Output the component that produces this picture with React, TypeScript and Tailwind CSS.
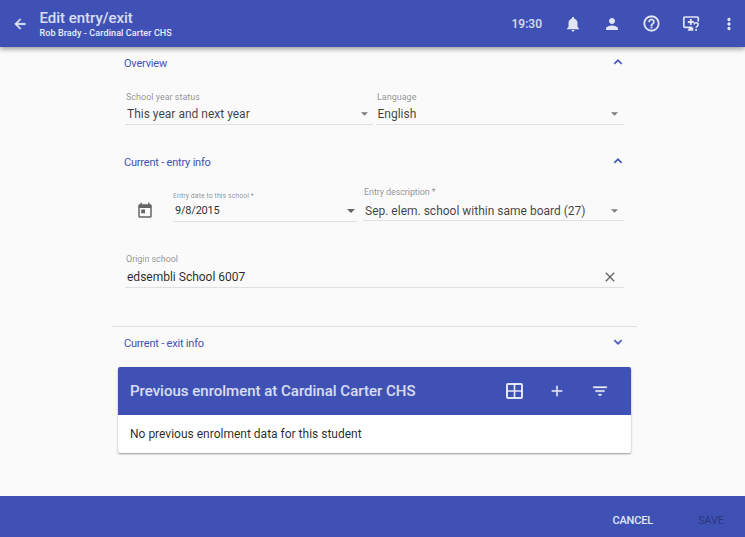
import type { ReactNode } from "react";

const paths = {
  back: "M20 11H7.83l5.59-5.59L12 4l-8 8 8 8 1.41-1.41L7.83 13H20v-2z",
  bell: "M12 22c1.1 0 2-.9 2-2h-4c0 1.1.89 2 2 2zm6-6v-5c0-3.07-1.64-5.64-4.5-6.32V4c0-.83-.67-1.5-1.5-1.5s-1.5.67-1.5 1.5v.68C7.63 5.36 6 7.92 6 11v5l-2 2v1h16v-1l-2-2z",
  person: "M12 12c2.21 0 4-1.79 4-4s-1.79-4-4-4-4 1.79-4 4 1.79 4 4 4zm0 2c-2.67 0-8 1.34-8 4v2h16v-2c0-2.66-5.33-4-8-4z",
  help: "M11 18h2v-2h-2v2zm1-16C6.48 2 2 6.48 2 12s4.48 10 10 10 10-4.48 10-10S17.52 2 12 2zm0 18c-4.41 0-8-3.59-8-8s3.59-8 8-8 8 3.59 8 8-3.59 8-8 8zm0-14c-2.21 0-4 1.79-4 4h2c0-1.1.9-2 2-2s2 .9 2 2c0 2-3 1.75-3 5h2c0-2.25 3-2.5 3-5 0-2.21-1.79-4-4-4z",
  more: "M12 8c1.1 0 2-.9 2-2s-.9-2-2-2-2 .9-2 2 .9 2 2 2zm0 2c-1.1 0-2 .9-2 2s.9 2 2 2 2-.9 2-2-.9-2-2-2zm0 6c-1.1 0-2 .9-2 2s.9 2 2 2 2-.9 2-2-.9-2-2-2z",
  up: "M12 8l-6 6 1.41 1.41L12 10.83l4.59 4.58L18 14z",
  down: "M16.59 8.59L12 13.17 7.41 8.59 6 10l6 6 6-6z",
  event: "M19 3h-1V1h-2v2H8V1H6v2H5c-1.11 0-2 .9-2 2v14c0 1.1.89 2 2 2h14c1.1 0 2-.9 2-2V5c0-1.1-.9-2-2-2zm0 16H5V8h14v11zM7 10h5v5H7z",
  close: "M19 6.41L17.59 5 12 10.59 6.41 5 5 6.41 10.59 12 5 17.59 6.41 19 12 13.41 17.59 19 19 17.59 13.41 12z",
  add: "M19 13h-6v6h-2v-6H5v-2h6V5h2v6h6v2z",
  filter: "M10 18h4v-2h-4v2zM3 6v2h18V6H3zm3 7h12v-2H6v2z",
};

function Icon({ name, className }: { name: keyof typeof paths; className: string }) {
  return (
    <svg viewBox="0 0 24 24" fill="currentColor" stroke="currentColor" className={`shrink-0 ${className}`}>
      <path d={paths[name]} />
    </svg>
  );
}

function ScreenHelpIcon() {
  return (
    <svg viewBox="0 0 18 18" className="size-[18px] shrink-0" fill="none" stroke="currentColor">
      <path d="M10 12.3H2.8a1 1 0 0 1-1-1V3a1 1 0 0 1 1-1h12.5a1 1 0 0 1 1 1v3.5" strokeWidth="1.7" />
      <path d="M8.8 4v6M5.8 7h6" strokeWidth="1.8" />
      <path d="M5.5 15.8h5.8v-3.2H7.4z" fill="currentColor" stroke="none" />
      <path d="M12.2 9.5c0-2.3 4-2.3 4 .1 0 1.6-2.1 1.7-2.1 3.2" strokeWidth="1.6" />
      <path d="M13.2 14h1.8v1.8h-1.8z" fill="currentColor" stroke="none" />
    </svg>
  );
}

function GridIcon() {
  return (
    <svg viewBox="0 0 18 18" className="size-[18px] shrink-0" fill="none" stroke="currentColor">
      <rect x="2" y="2" width="15" height="14" rx="1" strokeWidth="2" />
      <path d="M9.5 2v14M2 9h15" strokeWidth="1.7" />
    </svg>
  );
}

function Section({ title, open, className }: { title: string; open: boolean; className: string }) {
  return (
    <div className={`flex items-center justify-between pl-3 pr-[11px] text-[#3f51b5] ${className}`}>
      <span className="pt-0.5 text-[11px] leading-4 tracking-[-0.2px]">{title}</span>
      <Icon name={open ? "up" : "down"} className="relative -top-px size-4 stroke-[0.6]" />
    </div>
  );
}

function Caret({ className }: { className: string }) {
  return (
    <svg viewBox="0 0 8 4" className={`mb-px h-1 shrink-0 ${className}`} fill="currentColor">
      <path d="M0 0h8L4 4z" />
    </svg>
  );
}

function Field({
  label,
  labelClass = "text-[9px] leading-[14px]",
  valueClass = "h-5 pl-0.5 pr-[5px] text-[12px] text-black/75",
  className,
  value,
  end,
}: {
  label: string;
  labelClass?: string;
  valueClass?: string;
  className: string;
  value: string;
  end: ReactNode;
}) {
  return (
    <div className={`border-b border-[#e0e0e0] ${className}`}>
      <div className={`whitespace-nowrap text-black/45 ${labelClass} pl-px`}>{label}</div>
      <div className={`flex items-center justify-between whitespace-nowrap ${valueClass}`}>
        <span>{value}</span>
        {end}
      </div>
    </div>
  );
}

export default function App() {
  return (
    <div className="flex h-[537px] w-[745px] flex-col bg-[#fafafa] font-['Roboto',sans-serif]">
      <header className="z-10 flex h-[47px] shrink-0 items-center bg-[#3f51b5] pl-3 pr-2 text-white/85 shadow-[0_2px_5px_rgba(0,0,0,0.4)]">
        <Icon name="back" className="size-4 stroke-[0.8]" />
        <div className="ml-[11.5px] flex-1">
          <h1 className="text-[15px] leading-[18px] font-medium tracking-[-0.03px] text-white/80">Edit entry/exit</h1>
          <p className="text-[9px] leading-3 font-medium tracking-[0.1px] text-white/90">Rob Brady - Cardinal Carter CHS</p>
        </div>
        <span className="mr-[22px] text-[12px] font-medium text-white/80">19:30</span>
        <Icon name="bell" className="mr-[21px] size-[18px] stroke-0" />
        <Icon name="person" className="mr-[21px] size-[18px] stroke-0" />
        <Icon name="help" className="mr-[21px] size-[19px] stroke-[0.3]" />
        <div className="mr-5">
          <ScreenHelpIcon />
        </div>
        <Icon name="more" className="-mr-px size-[18px] stroke-[0.4]" />
      </header>

      <main className="ml-[112px] w-[525px] flex-1">
        <Section title="Overview" open className="h-8" />
        <div className="mt-[11px] flex gap-[3px] pl-[13px]">
          <Field label="School year status" value="This year and next year" className="w-[248px]" end={<Caret className="w-[7px] text-black/50" />} />
          <Field label="Language" value="English" valueClass="h-5 pl-[1.5px] pr-1.5 text-[12px] text-black/75" className="w-[248px]" end={<Caret className="w-[7px] text-black/50" />} />
        </div>
        <Section title="Current - entry info" open className="mt-[21px] h-8" />
        <div className="mt-[7px] flex items-start pl-6">
          <Icon name="event" className="mt-[17px] size-[18px] stroke-0 text-black/60" />
          <Field
            label="Entry date to this school *"
            value="9/8/2015"
            labelClass="text-[7px] leading-3 tracking-[0.04px] -indent-px"
            valueClass="mb-0.5 mt-px h-4 pl-0.5 pr-0.5 text-[11px] tracking-[-0.2px] text-black/85"
            className="mt-[5px] ml-[19px] w-[184px]"
            end={<Caret className="w-2 text-black/60" />}
          />
          <Field
            label="Entry description *"
            value="Sep. elem. school within same board (27)"
            labelClass="text-[9px] leading-[14px] tracking-[-0.1px]"
            valueClass="mt-[3px] h-[18px] pl-0.5 pr-1.5 text-[12px] text-black/75"
            className="ml-1.5 w-[261px]"
            end={<Caret className="w-[7px] text-black/50" />}
          />
        </div>
        <div className="mt-[30px] pl-[13px]">
          <Field
            label="Origin school"
            value="edsembli School 6007"
            labelClass="text-[9px] leading-[14px] tracking-[-0.05px]"
            valueClass="mt-px h-5 pl-0.5 pr-1.5 text-[12px] text-black/85"
            className="w-[499px]"
            end={<Icon name="close" className="size-4 stroke-0 text-black/60" />}
          />
        </div>
        <div className="mt-[38px] border-t border-[#e0e0e0]">
          <Section title="Current - exit info" open={false} className="h-8" />
        </div>
        <section className="mx-1.5 mt-2 w-[513px] overflow-hidden rounded-[2px] bg-white shadow-[0_1px_2px_rgba(0,0,0,0.4)]">
          <div className="flex h-12 items-center bg-[#3f51b5] pl-3 text-white/85">
            <h2 className="flex-1 text-[15px] font-medium text-white/80">Previous enrolment at Cardinal Carter CHS</h2>
            <GridIcon />
            <Icon name="add" className="ml-[25px] size-[18px] stroke-[0.2]" />
            <Icon name="filter" className="mr-[22px] ml-[25px] size-[18px] stroke-[0.4]" />
          </div>
          <p className="h-[38px] pl-3 text-[12px] leading-[38px] text-black/85">No previous enrolment data for this student</p>
        </section>
      </main>

      <footer className="flex h-[41px] shrink-0 items-center justify-end bg-[#3f51b5] pt-[9px] pr-[21px] text-[11px]">
        <button className="mr-[45px] font-medium tracking-[-0.2px] text-white/85">CANCEL</button>
        <button className="tracking-[-0.1px] text-black/35">SAVE</button>
      </footer>
    </div>
  );
}
